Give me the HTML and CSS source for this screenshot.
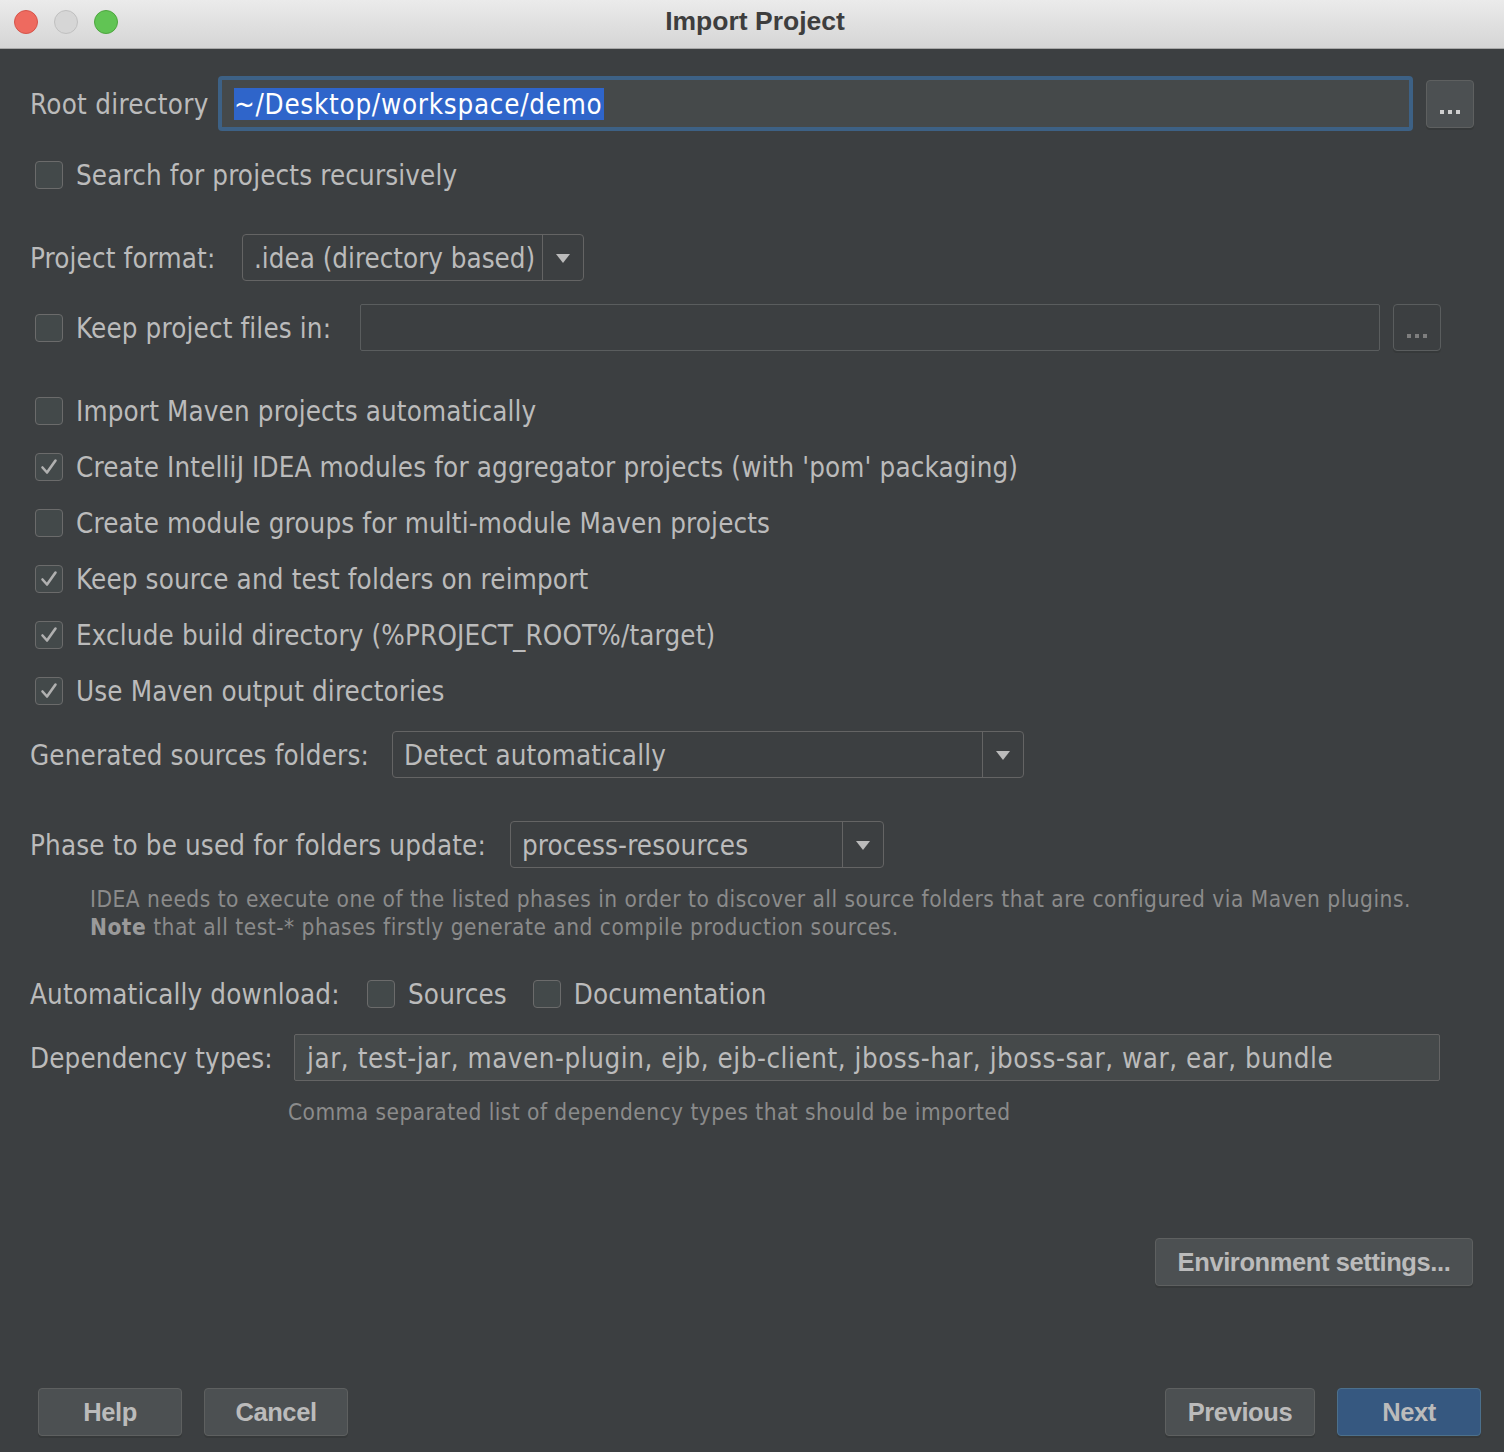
FILE: index.html
```html
<!DOCTYPE html>
<html>
<head>
<meta charset="utf-8">
<link rel="stylesheet" href="styles.css">
</head>
<body>
<div class="window">
  <div class="titlebar">
    <div class="lights">
      <span class="light red"></span>
      <span class="light gray"></span>
      <span class="light green"></span>
    </div>
    <div class="title">Import Project</div>
  </div>
  <div class="content">
    <div class="row root-row">
      <span class="label">Root directory</span>
      <div class="field focused"><span class="sel">~/Desktop/workspace/demo</span></div>
      <div class="dots-btn"><i></i><i></i><i></i></div>
    </div>

    <div class="row check-row search-row">
      <span class="cb"></span><span class="text">Search for projects recursively</span>
    </div>

    <div class="row format-row">
      <span class="label">Project format:</span>
      <div class="combo combo-format"><span class="combo-text">.idea (directory based)</span><span class="combo-arrow"><svg width="16" height="11" viewBox="0 0 16 11"><path d="M1 1h14L8 10z" fill="#bbbbbb"/></svg></span></div>
    </div>

    <div class="row keep-row">
      <span class="cb"></span><span class="text keep-label">Keep project files in:</span>
      <div class="field disabled"></div>
      <div class="dots-btn disabled"><i></i><i></i><i></i></div>
    </div>

    <div class="checks">
      <div class="crow"><span class="cb"></span><span class="text">Import Maven projects automatically</span></div>
      <div class="crow"><span class="cb checked"><svg width="22" height="22" viewBox="0 0 22 22"><path d="M4.5 11.5l4.5 5 8.5-12" fill="none" stroke="#b0b0b0" stroke-width="2.6" stroke-linecap="round" stroke-linejoin="round"/></svg></span><span class="text">Create IntelliJ IDEA modules for aggregator projects (with 'pom' packaging)</span></div>
      <div class="crow"><span class="cb"></span><span class="text">Create module groups for multi-module Maven projects</span></div>
      <div class="crow"><span class="cb checked"><svg width="22" height="22" viewBox="0 0 22 22"><path d="M4.5 11.5l4.5 5 8.5-12" fill="none" stroke="#b0b0b0" stroke-width="2.6" stroke-linecap="round" stroke-linejoin="round"/></svg></span><span class="text">Keep source and test folders on reimport</span></div>
      <div class="crow"><span class="cb checked"><svg width="22" height="22" viewBox="0 0 22 22"><path d="M4.5 11.5l4.5 5 8.5-12" fill="none" stroke="#b0b0b0" stroke-width="2.6" stroke-linecap="round" stroke-linejoin="round"/></svg></span><span class="text">Exclude build directory (%PROJECT_ROOT%/target)</span></div>
      <div class="crow"><span class="cb checked"><svg width="22" height="22" viewBox="0 0 22 22"><path d="M4.5 11.5l4.5 5 8.5-12" fill="none" stroke="#b0b0b0" stroke-width="2.6" stroke-linecap="round" stroke-linejoin="round"/></svg></span><span class="text">Use Maven output directories</span></div>
    </div>

    <div class="row gen-row">
      <span class="label">Generated sources folders:</span>
      <div class="combo combo-gen"><span class="combo-text">Detect automatically</span><span class="combo-arrow"><svg width="16" height="11" viewBox="0 0 16 11"><path d="M1 1h14L8 10z" fill="#bbbbbb"/></svg></span></div>
    </div>

    <div class="row phase-row">
      <span class="label">Phase to be used for folders update:</span>
      <div class="combo combo-phase"><span class="combo-text">process-resources</span><span class="combo-arrow"><svg width="16" height="11" viewBox="0 0 16 11"><path d="M1 1h14L8 10z" fill="#bbbbbb"/></svg></span></div>
    </div>

    <div class="hint phase-hint">
      <div>IDEA needs to execute one of the listed phases in order to discover all source folders that are configured via Maven plugins.</div>
      <div><b>Note</b> that all test-* phases firstly generate and compile production sources.</div>
    </div>

    <div class="row dl-row">
      <span class="label">Automatically download:</span>
      <span class="cb"></span><span class="text">Sources</span>
      <span class="cb"></span><span class="text">Documentation</span>
    </div>

    <div class="row dep-row">
      <span class="label">Dependency types:</span>
      <div class="field dep-field"><span class="dep-text">jar, test-jar, maven-plugin, ejb, ejb-client, jboss-har, jboss-sar, war, ear, bundle</span></div>
    </div>

    <div class="hint dep-hint">Comma separated list of dependency types that should be imported</div>

    <div class="env-row">
      <div class="btn env-btn">Environment settings...</div>
    </div>

    <div class="bottom">
      <div class="btn">Help</div>
      <div class="btn cancel">Cancel</div>
      <div class="spacer"></div>
      <div class="btn prev">Previous</div>
      <div class="btn primary">Next</div>
    </div>
  </div>
</div>
</body>
</html>
```

FILE: styles.css
```css
* { box-sizing: border-box; }
html, body { margin: 0; padding: 0; }
body {
  width: 1504px;
  height: 1452px;
  background: #3c3f41;
  overflow: hidden;
  font-family: "DejaVu Sans Condensed", "DejaVu Sans", sans-serif;
  font-stretch: condensed;
  color: #bbbbbb;
}
.window {
  width: 1504px;
  height: 1452px;
  display: flex;
  flex-direction: column;
}
.titlebar {
  height: 49px;
  flex: none;
  background: linear-gradient(#ebebeb, #d5d5d5);
  border-bottom: 1px solid #a8a8a8;
  display: flex;
  align-items: center;
  position: relative;
}
.lights {
  display: flex;
  gap: 16px;
  padding-left: 14px;
  padding-bottom: 4px;
}
.light {
  width: 24px;
  height: 24px;
  border-radius: 50%;
  display: block;
}
.light.red { background: #ee6a5f; border: 1px solid #d5544a; }
.light.gray { background: #d6d6d6; border: 1px solid #c0c0c0; }
.light.green { background: #61c454; border: 1px solid #4ea63f; }
.title {
  position: absolute;
  left: 0; right: 0; top: 0;
  height: 42px;
  line-height: 42px;
  text-align: center;
  padding-left: 6px;
  font-family: "Liberation Sans", Arial, sans-serif;
  font-stretch: normal;
  font-weight: bold;
  font-size: 26.5px;
  color: #3e3e3e;
}
.content {
  flex: 1;
  display: flex;
  flex-direction: column;
  padding: 0 0 0 30px;
}
.row {
  display: flex;
  align-items: center;
  font-size: 27.5px;
  letter-spacing: 0.15px;
  flex: none;
}
.label { white-space: nowrap; }
.text { white-space: nowrap; }

/* root row */
.root-row { margin-top: 27px; height: 55px; }
.root-row .label { width: 188px; letter-spacing: 0.3px; }
.field {
  height: 47px;
  background: #45494a;
  border: 1px solid #646464;
  border-radius: 2px;
  display: flex;
  align-items: center;
}
.field.focused {
  width: 1195px;
  height: 55px;
  border: 4px solid #3d6185;
  border-radius: 4px;
  padding-left: 12px;
}
.sel {
  background: #2f65ca;
  color: #ffffff;
  line-height: 32px;
  height: 32px;
  display: inline-block;
  padding: 0 2px 0 0;
  letter-spacing: 0.75px;
}
.dots-btn {
  width: 48px;
  height: 48px;
  margin-left: 13px;
  background: #4c5052;
  border: 1px solid #5e6060;
  border-radius: 4px;
  display: flex;
  align-items: center;
  justify-content: center;
  gap: 4px;
  padding-top: 17px;
  box-shadow: 0 2px 0 #36393a;
}
.dots-btn i {
  width: 4px;
  height: 4px;
  background: #cfcfcf;
  display: block;
}
.dots-btn.disabled {
  background: #3c3f41;
  border-color: #5a5d5e;
  box-shadow: 0 2px 0 #36393a;
  height: 47px;
  padding-top: 16px;
}
.dots-btn.disabled i { background: #7e7e7e; }

/* checkbox */
.cb {
  width: 28px;
  height: 28px;
  flex: none;
  border: 1.5px solid #6b6b6b;
  border-radius: 4px;
  background: #43494a;
  display: flex;
  align-items: center;
  justify-content: center;
}
.check-row .cb, .keep-row .cb, .crow .cb { margin-left: 5px; margin-right: 13px; }

.search-row { margin-top: 30px; height: 28px; }

.format-row { margin-top: 45px; height: 47px; }
.format-row .label { width: 212px; }
.combo {
  height: 47px;
  border: 1px solid #646464;
  border-radius: 4px;
  display: flex;
  align-items: center;
  background: #3c3f41;
}
.combo-text {
  flex: 1;
  padding-left: 11px;
  white-space: nowrap;
}
.combo-arrow {
  width: 41px;
  height: 100%;
  border-left: 1px solid #646464;
  display: flex;
  align-items: center;
  justify-content: center;
  padding-top: 2px;
}
.combo-format { width: 342px; }
.combo-format .combo-text { letter-spacing: 0; }

.keep-row { margin-top: 23px; height: 47px; }
.keep-label { width: 284px; }
.field.disabled {
  width: 1020px;
  background: #3c3f41;
  border-color: #5a5d5e;
}

.checks {
  margin-top: 32px;
  display: flex;
  flex-direction: column;
  font-size: 27.5px;
  letter-spacing: 0.15px;
}
.crow {
  height: 56px;
  display: flex;
  align-items: center;
}

.gen-row { margin-top: 12px; height: 47px; }
.gen-row .label { width: 362px; }
.combo-gen { width: 632px; }

.phase-row { margin-top: 43px; height: 47px; }
.phase-row .label { width: 480px; }
.combo-phase { width: 374px; }

.hint {
  color: #8b8b8b;
  font-size: 22.5px;
  line-height: 28px;
  white-space: nowrap;
  letter-spacing: 0.5px;
}
.hint b { color: #9a9a9a; }
.phase-hint { margin-top: 17px; padding-left: 60px; }

.dl-row { margin-top: 39px; height: 28px; }
.dl-row .label { width: 337px; }
.dl-row .cb { margin-right: 13px; }
.dl-row .text { margin-right: 26px; }

.dep-row { margin-top: 26px; height: 47px; }
.dep-row .label { width: 264px; }
.dep-field { width: 1146px; padding-left: 12px; }
.dep-text { white-space: nowrap; letter-spacing: 0.55px; }

.dep-hint { margin-top: 17px; padding-left: 258px; letter-spacing: 0.45px; }

.btn {
  height: 48px;
  background: #4c5052;
  border: 1px solid #5e6060;
  border-radius: 4px;
  font-family: "Liberation Sans", Arial, sans-serif;
  font-stretch: normal;
  font-weight: bold;
  font-size: 25.5px;
  color: #bbbbbb;
  display: flex;
  align-items: center;
  justify-content: center;
  box-shadow: 0 2px 0 #36393a;
  letter-spacing: -0.4px;
}
.env-row {
  margin-top: 112px;
  display: flex;
  justify-content: flex-end;
  padding-right: 31px;
}
.env-btn { width: 318px; }

.bottom {
  margin-top: 102px;
  display: flex;
  padding-left: 8px;
  padding-right: 23px;
}
.bottom .btn { width: 144px; }
.bottom .cancel { margin-left: 22px; }
.bottom .spacer { flex: 1; }
.bottom .prev { width: 150px; margin-right: 22px; }
.bottom .primary {
  background: #365880;
  border-color: #4c708c;
}
```
